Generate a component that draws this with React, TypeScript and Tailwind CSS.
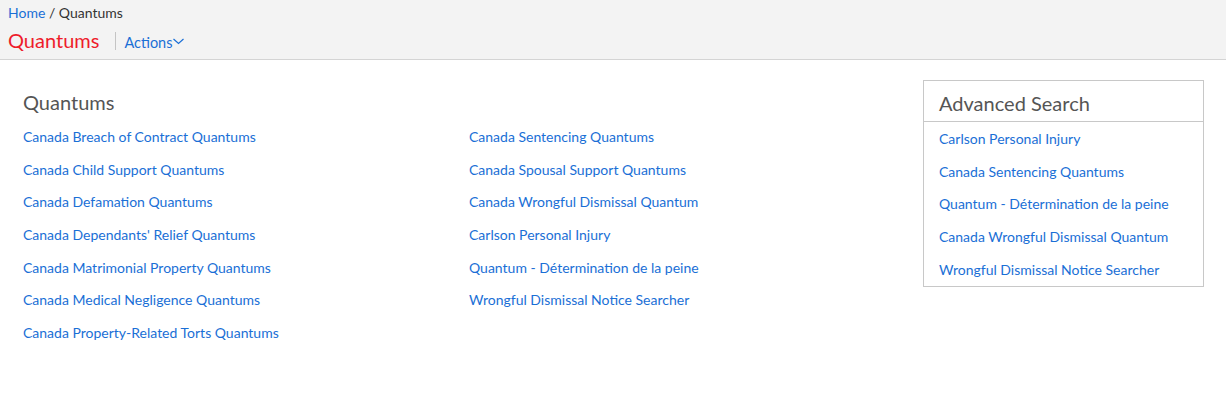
const left = [
  'Canada Breach of Contract Quantums',
  'Canada Child Support Quantums',
  'Canada Defamation Quantums',
  "Canada Dependants' Relief Quantums",
  'Canada Matrimonial Property Quantums',
  'Canada Medical Negligence Quantums',
  'Canada Property-Related Torts Quantums',
]

const right = [
  'Canada Sentencing Quantums',
  'Canada Spousal Support Quantums',
  'Canada Wrongful Dismissal Quantum',
  'Carlson Personal Injury',
  'Quantum - Détermination de la peine',
  'Wrongful Dismissal Notice Searcher',
]

const advanced = [
  'Carlson Personal Injury',
  'Canada Sentencing Quantums',
  'Quantum - Détermination de la peine',
  'Canada Wrongful Dismissal Quantum',
  'Wrongful Dismissal Notice Searcher',
]

function LinkList({ items }: { items: string[] }) {
  return (
    <ul className="flex flex-col">
      {items.map((item) => (
        <li key={item} className="h-[32.7px] leading-[20px] pt-[1px]">
          <a href="#" className="text-[14px] text-[#1a6fd6] hover:underline">
            {item}
          </a>
        </li>
      ))}
    </ul>
  )
}

export default function App() {
  return (
    <div className="w-[1226px] h-[400px] bg-white font-['Lato',sans-serif]">
      <header className="h-[60px] bg-[#f3f3f3] border-b border-[#d4d4d4] px-[8px] pt-[4px]">
        <div className="text-[14px] leading-[18px] text-[#333]">
          <a href="#" className="text-[#1a6fd6]">Home</a> / Quantums
        </div>
        <div className="flex items-center mt-[6px] h-[24px]">
          <h1 className="text-[20px] leading-[24px] text-[#ee1c2b]">Quantums</h1>
          <span className="ml-[16px] mr-[8px] h-[18px] w-px bg-[#c4c4c4] mt-[2px]" />
          <button className="flex items-center text-[14.5px] text-[#1a6fd6] mt-[5px]">
            Actions
            <svg width="11" height="7" viewBox="0 0 11 7" className="ml-[1px] -mt-[2px]" fill="none">
              <polyline points="0.5,1 5.5,5.5 10.5,1" stroke="#1a6fd6" strokeWidth="1.2" />
            </svg>
          </button>
        </div>
      </header>
      <main className="flex px-[23px] pt-[30px]">
        <section className="flex-1">
          <h2 className="text-[20px] leading-[24px] text-[#555] mb-[11px]">Quantums</h2>
          <div className="flex">
            <div className="w-[446px]">
              <LinkList items={left} />
            </div>
            <div>
              <LinkList items={right} />
            </div>
          </div>
        </section>
        <aside className="w-[281px] h-[207px] border border-[#c8c8c8] -mt-[10px] mr-[-1px]">
          <h2 className="h-[41px] border-b border-[#c8c8c8] px-[15px] pt-[10px] text-[20px] leading-[24px] text-[#555]">
            Advanced Search
          </h2>
          <div className="px-[15px] pt-[5px]">
            <LinkList items={advanced} />
          </div>
        </aside>
      </main>
    </div>
  )
}
